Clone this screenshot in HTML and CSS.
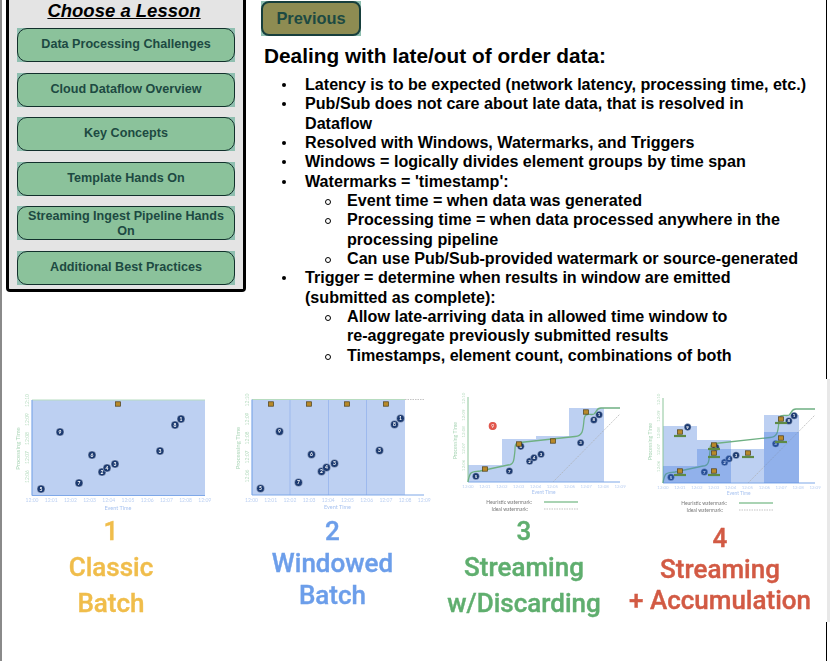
FILE: index.html
```html
<!DOCTYPE html>
<html lang="en">
<head>
    <meta charset="UTF-8">
    <meta name="viewport" content="width=device-width, initial-scale=1.0">
    <title>Choose a Lesson</title>
    <link rel="stylesheet" href="styles.css">
</head>
<body>
    <div class="page">
        <div class="top">
            <aside class="sidebar">
                <h3>Choose a Lesson</h3>
                <div class="lessons">
                    <button class="lesson"><span>Data Processing Challenges</span></button>
                    <button class="lesson"><span>Cloud Dataflow Overview</span></button>
                    <button class="lesson"><span>Key Concepts</span></button>
                    <button class="lesson"><span>Template Hands On</span></button>
                    <button class="lesson lesson-long"><span>Streaming Ingest Pipeline Hands On</span></button>
                    <button class="lesson"><span>Additional Best Practices</span></button>
                </div>
            </aside>
            <main class="content">
                <button class="previous"><span>Previous</span></button>
                <h2>Dealing with late/out of order data:</h2>
                <ul>
                    <li>Latency is to be expected (network latency, processing time, etc.)</li>
                    <li>Pub/Sub does not care about late data, that is resolved in Dataflow</li>
                    <li>Resolved with Windows, Watermarks, and Triggers</li>
                    <li>Windows = logically divides element groups by time span</li>
                    <li>Watermarks = 'timestamp':
                        <ul>
                            <li>Event time = when data was generated</li>
                            <li>Processing time = when data processed anywhere in the processing pipeline</li>
                            <li>Can use Pub/Sub-provided watermark or source-generated</li>
                        </ul>
                    </li>
                    <li>Trigger = determine when results in window are emitted (submitted as complete):
                        <ul>
                            <li>Allow late-arriving data in allowed time window to <span class="nowrap">re-aggregate</span> previously submitted results</li>
                            <li>Timestamps, element count, combinations of both</li>
                        </ul>
                    </li>
                </ul>
            </main>
        </div>

        <section class="figures">
            <div class="charts">
                <!-- chart 1: classic batch. viewBox values are page coordinates -->
                <svg class="chart chart-1" viewBox="3 379 219 134">
                    <defs>
                        <!-- the ten data points, origin = 12:00 on the axes -->
                        <g id="scatter">
                            <g class="dot"><circle cx="9" cy="-6.5" r="4"/><text x="9" y="-4.8">5</text></g>
                            <g class="dot"><circle cx="28" cy="-63.5" r="4"/><text x="28" y="-61.8">9</text></g>
                            <g class="dot"><circle cx="47" cy="-12.5" r="4"/><text x="47" y="-10.8">7</text></g>
                            <g class="dot"><circle cx="60" cy="-40.5" r="4"/><text x="60" y="-38.8">6</text></g>
                            <g class="dot"><circle cx="70" cy="-23.5" r="4"/><text x="70" y="-21.8">2</text></g>
                            <g class="dot"><circle cx="75" cy="-27.5" r="4"/><text x="75" y="-25.8">4</text></g>
                            <g class="dot"><circle cx="83" cy="-31.5" r="4"/><text x="83" y="-29.8">3</text></g>
                            <g class="dot"><circle cx="128" cy="-44.5" r="4"/><text x="128" y="-42.8">3</text></g>
                            <g class="dot"><circle cx="143" cy="-70.5" r="4"/><text x="143" y="-68.8">8</text></g>
                            <g class="dot"><circle cx="149" cy="-76.5" r="4"/><text x="149" y="-74.8">1</text></g>
                        </g>
                        <!-- axis labels, same origin -->
                        <g id="labels">
                            <g class="tick-y">
                                <text transform="translate(-3 -19) rotate(-90)">12:06</text>
                                <text transform="translate(-3 -38) rotate(-90)">12:07</text>
                                <text transform="translate(-3 -57) rotate(-90)">12:08</text>
                                <text transform="translate(-3 -76) rotate(-90)">12:09</text>
                                <text transform="translate(-3 -95) rotate(-90)">12:10</text>
                            </g>
                            <text class="title-y" transform="translate(-12 -47) rotate(-90)">Processing Time</text>
                            <g class="tick-x">
                                <text x="0" y="6.500">12:00</text>
                                <text x="19.200" y="6.500">12:01</text>
                                <text x="38.400" y="6.500">12:02</text>
                                <text x="57.600" y="6.500">12:03</text>
                                <text x="76.800" y="6.500">12:04</text>
                                <text x="96" y="6.500">12:05</text>
                                <text x="115.200" y="6.500">12:06</text>
                                <text x="134.400" y="6.500">12:07</text>
                                <text x="153.600" y="6.500">12:08</text>
                                <text x="172.800" y="6.500">12:09</text>
                            </g>
                            <text class="title-x" x="86" y="14">Event Time</text>
                        </g>
                        <g id="legend">
                            <text class="legend-text" x="64" y="21.500">Heuristic watermark:</text>
                            <line class="legend-green" x1="76" y1="20" x2="110" y2="20"/>
                            <text class="legend-text" x="60" y="28.500">Ideal watermark:</text>
                            <line class="ideal" x1="76" y1="27" x2="110" y2="27"/>
                        </g>
                        <g id="marker">
                            <rect class="marker" x="-2.500" y="-2.200" width="5" height="4.400"/>
                        </g>
                    </defs>
                    <rect class="pane" x="32" y="400" width="173" height="95.500"/>
                    <line class="axis-top" x1="32" y1="400" x2="205" y2="400"/>
                    <line class="axis" x1="32" y1="400" x2="32" y2="495.500"/>
                    <line class="axis" x1="32" y1="495.500" x2="205" y2="495.500"/>
                    <use href="#labels" transform="translate(32 495.500)"/>
                    <use href="#scatter" transform="translate(32 495.500)"/>
                    <use href="#marker" x="118" y="404"/>
                </svg>

                <!-- chart 2: windowed batch -->
                <svg class="chart chart-2" viewBox="222 379 223 134">
                    <rect class="pane" x="252" y="399.500" width="153" height="95.500"/>
                    <line class="divider" x1="290" y1="400" x2="290" y2="495"/>
                    <line class="divider" x1="328.500" y1="400" x2="328.500" y2="495"/>
                    <line class="divider" x1="366.500" y1="400" x2="366.500" y2="495"/>
                    <line class="axis-top" x1="252" y1="399.500" x2="405" y2="399.500"/>
                    <line class="ideal" x1="405" y1="399.500" x2="424" y2="399.500"/>
                    <line class="axis" x1="252" y1="399.500" x2="252" y2="495"/>
                    <line class="axis" x1="252" y1="495" x2="424" y2="495"/>
                    <use href="#labels" transform="translate(251.500 495)"/>
                    <use href="#scatter" transform="translate(251.500 495)"/>
                    <use href="#marker" x="271" y="404"/>
                    <use href="#marker" x="309" y="404"/>
                    <use href="#marker" x="347" y="404"/>
                    <use href="#marker" x="386" y="404"/>
                </svg>

                <!-- chart 3: streaming, discarding -->
                <svg class="chart chart-3" viewBox="445 379 183 134">
                    <rect class="pane" x="468" y="465" width="34" height="17"/>
                    <rect class="pane" x="502" y="439" width="34" height="43"/>
                    <rect class="pane" x="536" y="436" width="33" height="46"/>
                    <rect class="pane" x="569" y="408" width="35" height="74"/>
                    <line class="ideal" x1="553" y1="482" x2="620" y2="414"/>
                    <line class="axis-green" x1="468" y1="397" x2="468" y2="482"/>
                    <line class="axis" x1="468" y1="482" x2="620" y2="482"/>
                    <use href="#labels" transform="translate(468 482) scale(.88)"/>
                    <use href="#scatter" transform="translate(468 482) scale(.88)"/>
                    <path class="watermark" d="M468 482 C470 470 472 472 480 471 L508 465 C514 465 514 460 515 450 C515 443 516 443 520 442.500 L575 436.500 C583 436 583 430 584 420 C585 411 590 416 594 414 C597 412 596 408 601 408 L620 408"/>
                    <g class="dropped"><circle cx="492.700" cy="426" r="4"/><text x="492.700" y="427.700">9</text></g>
                    <use href="#marker" x="485" y="469"/>
                    <use href="#marker" x="519" y="444"/>
                    <use href="#marker" x="553" y="441"/>
                    <use href="#marker" x="586" y="412"/>
                    <use href="#legend" transform="translate(468 482)"/>
                </svg>

                <!-- chart 4: streaming, accumulation -->
                <svg class="chart chart-4" viewBox="628 379 199 134">
                    <rect class="pane" x="663" y="426" width="34" height="57"/>
                    <rect class="pane" x="697" y="440" width="34" height="43"/>
                    <rect class="pane" x="731" y="449" width="33" height="34"/>
                    <rect class="pane" x="764" y="415" width="35" height="68"/>
                    <line class="ideal" x1="748" y1="483" x2="815" y2="415"/>
                    <line class="axis-green" x1="663" y1="398" x2="663" y2="483"/>
                    <line class="axis" x1="663" y1="483" x2="815" y2="483"/>
                    <use href="#labels" transform="translate(663 483) scale(.88)"/>
                    <use href="#scatter" transform="translate(663 483) scale(.88)"/>
                    <path class="watermark" d="M663 483 C665 471 667 473 675 472 L703 466 C709 466 709 461 710 451 C710 444 711 444 715 443.500 L770 437.500 C778 437 778 431 779 421 C780 412 785 417 789 415 C792 413 791 409 796 409 L815 409"/>
                    <rect class="pane-dark" x="663" y="466" width="34" height="17"/>
                    <rect class="pane-dark" x="697" y="449" width="34" height="34"/>
                    <rect class="pane-dark" x="764" y="432" width="35" height="51"/>
                    <g class="stack"><use href="#marker" x="680" y="432"/><line x1="674" y1="436" x2="686" y2="436"/></g>
                    <g class="stack"><use href="#marker" x="680" y="471"/><line x1="674" y1="475" x2="686" y2="475"/></g>
                    <g class="stack"><use href="#marker" x="714" y="445"/><line x1="708" y1="449" x2="720" y2="449"/></g>
                    <g class="stack"><use href="#marker" x="714" y="453"/><line x1="708" y1="457" x2="720" y2="457"/></g>
                    <g class="stack"><use href="#marker" x="714" y="471"/><line x1="708" y1="475" x2="720" y2="475"/></g>
                    <g class="stack"><use href="#marker" x="748" y="453"/><line x1="742" y1="457" x2="754" y2="457"/></g>
                    <g class="stack"><use href="#marker" x="781" y="419"/><line x1="775" y1="423" x2="787" y2="423"/></g>
                    <g class="stack"><use href="#marker" x="781" y="438"/><line x1="775" y1="442" x2="787" y2="442"/></g>
                    <use href="#legend" transform="translate(663 483)"/>
                </svg>
            </div>
            <div class="captions">
                <div class="caption caption-1">1<br>Classic<br>Batch</div>
                <div class="caption caption-2">2<br>Windowed<br>Batch</div>
                <div class="caption caption-3">3<br>Streaming<br>w/Discarding</div>
                <div class="caption caption-4">4<br>Streaming<br>+ Accumulation</div>
            </div>
        </section>
    </div>
</body>
</html>
```

FILE: styles.css
```css
* {
    box-sizing: border-box;
}
body {
    font-family: "Liberation Sans", Arial, sans-serif;
    margin: 0;
    padding: 0;
    background-color: white;
    color: black;
    overflow: hidden;
}
.page {
    width: 827px;
    height: 661px;
    border-left: 2px solid #8a8a8a;
    border-right: 1px solid black;
}
.top {
    display: flex;
    height: 379px;
}

/* lesson menu */
.sidebar {
    width: 240px;
    height: 292px;
    margin-left: 4px;
    padding: 0 8px;
    background-color: #e4e4e4;
    border: 3px solid black;
    border-top: none;
    border-radius: 0 0 4px 4px;
}
.sidebar h3 {
    margin: 0;
    height: 28px;
    padding-right: 4px;
    font-size: 18.5px;
    line-height: 22px;
    font-style: italic;
    text-align: center;
    text-decoration: underline;
}
.lessons {
    display: flex;
    flex-direction: column;
    gap: 10.6px;
}
.lesson {
    display: block;
    width: 218px;
    height: 34px;
    padding: 0;
    background-color: #8fbfb0;
    border: none;
    font-family: inherit;
    font-size: 12.6px;
    font-weight: bold;
    line-height: 15px;
    color: #1d4a42;
}
.lesson span {
    display: flex;
    align-items: center;
    justify-content: center;
    height: 100%;
    padding: 0 5px 1px;
    background-color: #8bc29b;
    border: 1px solid #12302c;
    border-radius: 10px;
}
.lesson-long span {
    padding: 2px 5px 0;
}

/* lesson text */
.content {
    width: 548px;
    margin-left: 15px;
    padding-top: 1px;
}
.previous {
    display: block;
    width: 100px;
    height: 35px;
    padding: 0;
    background-color: #8fbfb0;
    border: none;
    font-family: inherit;
    font-size: 16.4px;
    font-weight: bold;
    color: #1d4a42;
}
.previous span {
    display: flex;
    align-items: center;
    justify-content: center;
    height: 100%;
    background-color: #8e8c52;
    border: 2px solid #173f3d;
    border-radius: 8px;
}
.content h2 {
    margin: 8px 0 8px 3px;
    font-size: 20.8px;
    line-height: 23px;
}
.content ul {
    margin: 0;
    padding-left: 44px;
    list-style: none;
    font-size: 16.13px;
    font-weight: bold;
    line-height: 19.35px;
}
.content li {
    position: relative;
}
.content li::before {
    content: "";
    position: absolute;
    left: -23px;
    top: 8px;
    width: 4px;
    height: 4px;
    border-radius: 50%;
    background-color: black;
}
.content ul ul {
    padding-left: 42px;
}
.content ul ul li::before {
    left: -22px;
    top: 8px;
    width: 4px;
    height: 4px;
    background-color: white;
    border: 1px solid black;
}
.nowrap {
    white-space: nowrap;
}

/* the four window types */
.figures {
    width: 827px;
    height: 243px;
    margin-left: 1px;
    background-color: white;
    border-right: 3px solid #e8e8e8;
}
.charts {
    display: flex;
    height: 134px;
}
.chart {
    display: block;
    height: 134px;
    filter: blur(0.5px);
}
.chart-1 {
    width: 219px;
}
.chart-2 {
    width: 223px;
}
.chart-3 {
    width: 183px;
}
.chart-4 {
    width: 199px;
}
.chart text {
    font-family: Lato, sans-serif;
}
.pane {
    fill: #bdd0f2;
}
.pane-dark {
    fill: #3f78e0;
    fill-opacity: 0.35;
}
.axis {
    stroke: #7fa8e8;
    stroke-width: 1.2;
}
.axis-top {
    stroke: #b7dcc0;
    stroke-width: 1;
}
.axis-green {
    stroke: #8cc59a;
    stroke-width: 1;
}
.divider {
    stroke: #9db9ee;
    stroke-width: 1;
}
.ideal {
    stroke: #aaa;
    stroke-width: 0.7;
    stroke-dasharray: 1.5 1;
}
.watermark {
    fill: none;
    stroke: #6fb083;
    stroke-width: 1.3;
}
.legend-green {
    stroke: #8cc59a;
    stroke-width: 1.3;
}
.legend-text {
    font-size: 5px;
    fill: #777;
    text-anchor: end;
}
.dot circle {
    fill: #1c3a70;
    stroke: #e6ecf8;
    stroke-width: 0.4;
}
.dot text {
    font-size: 5px;
    font-weight: bold;
    fill: white;
    text-anchor: middle;
}
.dropped circle {
    fill: #e2574c;
}
.dropped text {
    font-size: 5px;
    fill: white;
    text-anchor: middle;
}
.marker {
    fill: #b8892a;
    stroke: #4a3c18;
    stroke-width: 0.7;
}
.stack line {
    stroke: #5e8a45;
    stroke-width: 2.2;
}
.tick-y text {
    font-size: 5px;
    fill: #b7dcc0;
    text-anchor: middle;
}
.tick-x text {
    font-size: 5px;
    fill: #bcd0f2;
    text-anchor: middle;
}
.title-y {
    font-size: 6px;
    fill: #a9d5b5;
    text-anchor: middle;
}
.title-x {
    font-size: 5.5px;
    fill: #a8c3f0;
    text-anchor: middle;
}

.captions {
    display: grid;
    grid-template-columns: 219px 223px 183px 199px;
}
.caption {
    font-family: Roboto, sans-serif;
    font-size: 26px;
    font-weight: 500;
    text-align: center;
    white-space: nowrap;
    -webkit-text-stroke: 0.4px;
    filter: blur(0.4px);
}
.caption-1 {
    line-height: 36px;
    margin-right: 3px;
    color: #f0bd4b;
}
.caption-2 {
    padding-top: 2px;
    line-height: 32px;
    margin-right: 2px;
    color: #6c9eea;
}
.caption-3 {
    line-height: 36px;
    margin-right: 25px;
    color: #5fae6e;
}
.caption-4 {
    padding-top: 10px;
    line-height: 31px;
    margin-left: -15px;
    color: #d25a44;
}
```
